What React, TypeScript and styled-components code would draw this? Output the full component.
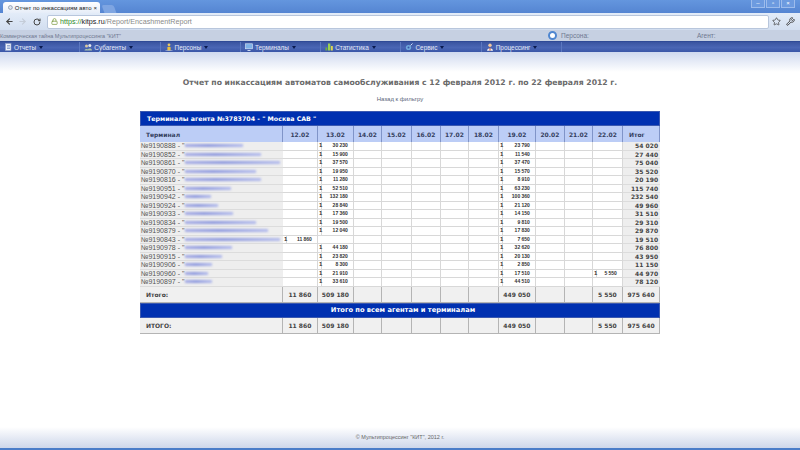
import styled, { createGlobalStyle } from "styled-components";
import { ArrowLeft, ArrowRight, RotateCw, Star, Wrench, Lock } from "lucide-react";

const GlobalStyle = createGlobalStyle`
  html, body { margin: 0; padding: 0; height: 100%; background: #fff; overflow: hidden; }
  #root { height: 100%; }
`;

const DAYS = ["12.02", "13.02", "14.02", "15.02", "16.02", "17.02", "18.02", "19.02", "20.02", "21.02", "22.02"];
const COLS = [143, 35, 36, 28, 30, 29, 28, 30, 37, 29, 28, 30, 37];
const MENU = ["Отчеты", "Субагенты", "Персоны", "Терминалы", "Статистика", "Сервис", "Процессинг"];

// each row: id, width of the hidden name, sums by day, total
const ROWS: { id: string; blur: number; sums: Record<string, string>; total: string }[] = [
  { id: "9190888", blur: 58, sums: { "13.02": "30 230", "19.02": "23 790" }, total: "54 020" },
  { id: "9190852", blur: 76, sums: { "13.02": "15 900", "19.02": "11 540" }, total: "27 440" },
  { id: "9190861", blur: 95, sums: { "13.02": "37 570", "19.02": "37 470" }, total: "75 040" },
  { id: "9190870", blur: 71, sums: { "13.02": "19 950", "19.02": "15 570" }, total: "35 520" },
  { id: "9190816", blur: 76, sums: { "13.02": "11 280", "19.02": "8 910" }, total: "20 190" },
  { id: "9190951", blur: 46, sums: { "13.02": "52 510", "19.02": "63 230" }, total: "115 740" },
  { id: "9190942", blur: 26, sums: { "13.02": "132 180", "19.02": "100 360" }, total: "232 540" },
  { id: "9190924", blur: 33, sums: { "13.02": "28 840", "19.02": "21 120" }, total: "49 960" },
  { id: "9190933", blur: 48, sums: { "13.02": "17 360", "19.02": "14 150" }, total: "31 510" },
  { id: "9190834", blur: 71, sums: { "13.02": "19 500", "19.02": "9 810" }, total: "29 310" },
  { id: "9190879", blur: 83, sums: { "13.02": "12 040", "19.02": "17 830" }, total: "29 870" },
  { id: "9190843", blur: 95, sums: { "12.02": "11 860", "19.02": "7 650" }, total: "19 510" },
  { id: "9190978", blur: 47, sums: { "13.02": "44 180", "19.02": "32 620" }, total: "76 800" },
  { id: "9190915", blur: 37, sums: { "13.02": "23 820", "19.02": "20 130" }, total: "43 950" },
  { id: "9190906", blur: 27, sums: { "13.02": "8 300", "19.02": "2 850" }, total: "11 150" },
  { id: "9190960", blur: 23, sums: { "13.02": "21 910", "19.02": "17 510", "22.02": "5 550" }, total: "44 970" },
  { id: "9190897", blur: 27, sums: { "13.02": "33 610", "19.02": "44 510" }, total: "78 120" },
];

const TOTALS: Record<string, string> = { "12.02": "11 860", "13.02": "509 180", "19.02": "449 050", "22.02": "5 550" };

const Page = styled.div`
  height: 450px;
  display: flex;
  flex-direction: column;
  font-family: "Liberation Sans", Arial, sans-serif;
`;

const TitleBar = styled.div`
  height: 13px;
  flex: none;
  background: linear-gradient(#6496de, #5585d2);
  display: flex;
  align-items: flex-end;
  padding-left: 3px;
  position: relative;
`;

const Tab = styled.div`
  width: 97px;
  height: 11px;
  box-sizing: border-box;
  background: linear-gradient(#fff, #e6edf8);
  border-radius: 3px 3px 0 0;
  display: flex;
  align-items: center;
  gap: 2px;
  padding: 0 3px 0 5px;
  font-size: 6px;
  color: #222;
  white-space: nowrap;
`;

const TabTitle = styled.span`
  flex: 1;
`;

const TabStub = styled.div`
  width: 12px;
  height: 8px;
  margin-left: 3px;
  background: #7ea5e2;
  border-radius: 2px 2px 0 0;
  transform: skewX(20deg);
`;

const WindowButtons = styled.div`
  position: absolute;
  right: 5px;
  top: 0;
  display: flex;
  gap: 1px;
`;

const WindowButton = styled.div`
  width: 14px;
  height: 8px;
  background: #6d9be0;
  border: 1px solid #9dbcec;
  border-top: 0;
  box-sizing: border-box;
  color: #fff;
  font-size: 6px;
  line-height: 7px;
  text-align: center;
`;

const Toolbar = styled.div`
  height: 17px;
  flex: none;
  background: linear-gradient(#e3ecf8, #d2def0);
  display: flex;
  align-items: center;
  padding: 0 3px;
  box-sizing: border-box;
`;

const NavIcon = styled.span<{ $w: number; $c?: string }>`
  width: ${({ $w }) => $w}px;
  display: flex;
  justify-content: center;
  color: ${({ $c }) => $c || "#444"};
`;

const UrlBox = styled.div`
  flex: 1;
  height: 14px;
  margin: 0 0 0 3px;
  box-sizing: border-box;
  background: #fff;
  border: 1px solid #b8c6dc;
  border-radius: 2px;
  display: flex;
  align-items: center;
  gap: 2px;
  padding-left: 3px;
  font-size: 7.2px;
  color: #8a8a8a;
`;

const UrlGreen = styled.span`
  color: #2a8a2a;
`;

const UrlHost = styled.span`
  color: #222;
`;

const InfoStrip = styled.div`
  height: 11px;
  flex: none;
  background: #c6d0e2;
  display: flex;
  align-items: center;
  font-size: 5.5px;
  color: #6f7890;
`;

const Secret = styled.span`
  width: 546px;
`;

const Person = styled.span`
  width: 151px;
  box-sizing: border-box;
  padding-left: 15px;
  font-size: 6.5px;
  position: relative;
`;

const PersonDot = styled.span`
  position: absolute;
  left: 2px;
  top: -1px;
  width: 5px;
  height: 5px;
  border-radius: 50%;
  background: #fff;
  border: 2px solid #4f86d0;
`;

const Agent = styled.span`
  font-size: 6.5px;
`;

const MenuBar = styled.div`
  height: 11px;
  flex: none;
  box-sizing: border-box;
  background: linear-gradient(#3a54a0, #4a66b4 55%, #3a56a8);
  border-top: 1px solid #2f4a96;
  display: flex;
`;

const MenuItem = styled.div`
  width: 80.3px;
  box-sizing: border-box;
  border-right: 1px solid #5c78c0;
  display: flex;
  align-items: center;
  gap: 2px;
  padding-left: 4px;
  font-size: 6.4px;
  color: #e4e9f6;
`;

const MenuGlyph = styled.svg`
  width: 8px;
  height: 8px;
  flex: none;
`;

const MenuArrow = styled.span`
  width: 0;
  height: 0;
  margin-left: 1px;
  border-left: 2.5px solid transparent;
  border-right: 2.5px solid transparent;
  border-top: 3px solid #0a1a50;
`;

const Main = styled.div`
  flex: 1;
  background: linear-gradient(#cfd9ef, #fff 20px);
  display: flex;
  flex-direction: column;
  align-items: center;
  padding-top: 25px;
`;

const Title = styled.h1`
  margin: 0;
  font: bold 7.7px/12px "DejaVu Sans", Verdana, sans-serif;
  color: #6a6a6a;
  white-space: nowrap;
`;

const BackLink = styled.a`
  margin-top: 6px;
  font-size: 6px;
  line-height: 8px;
  color: #5a6478;
`;

const Table = styled.table`
  margin-top: 8px;
  width: 520px;
  table-layout: fixed;
  border-collapse: separate;
  border-spacing: 0;
  border: 0;
  font-size: 6.5px;
  color: #333;
`;

const BlueRow = styled.td<{ $center?: boolean }>`
  height: 15px;
  padding: 0 0 0 6px;
  background: #0030b0;
  color: #fff;
  font: bold ${({ $center }) => ($center ? "6.7px" : "6.3px")} "DejaVu Sans", Verdana, sans-serif;
  text-align: ${({ $center }) => ($center ? "center" : "left")};
  border: 1px solid #3a58b0;
  box-sizing: border-box;
`;

const HeadCell = styled.th<{ $left?: boolean }>`
  height: 16px;
  padding: 0 0 0 ${({ $left }) => ($left ? "6px" : "0")};
  background: #bccdf6;
  color: #34405e;
  font: bold 6px "DejaVu Sans", Verdana, sans-serif;
  text-align: ${({ $left }) => ($left ? "left" : "center")};
  border-right: 1px solid #8094c8;
  box-sizing: border-box;
`;

const NameCell = styled.td`
  height: 8.5px;
  padding: 0 0 0 1px;
  box-sizing: border-box;
  background: #eeeeee;
  border-bottom: 1px solid #dcdcdc;
  font-size: 7px;
  line-height: 7px;
  color: #555;
  white-space: nowrap;
  overflow: hidden;
`;

const Smudge = styled.span`
  display: inline-block;
  height: 3px;
  margin-left: 1px;
  vertical-align: 1px;
  background: linear-gradient(90deg, #a8aee6, #8f9ade 40%, #b4bcec);
  filter: blur(0.8px);
`;

const DayCell = styled.td`
  height: 8.5px;
  padding: 0;
  box-sizing: border-box;
  background: #fff;
  border-right: 1px solid #d8d8d8;
  border-bottom: 1px solid #d8d8d8;
  font-size: 6px;
  line-height: 7px;
`;

const DayInner = styled.div`
  display: flex;
  height: 7.5px;
`;

const Count = styled.span`
  width: 4px;
  border-right: 1px solid #d8d8d8;
  padding-left: 1px;
  box-sizing: border-box;
  font-weight: bold;
`;

const Sum = styled.span`
  flex: 1;
  text-align: right;
  padding-right: 5px;
  font-weight: bold;
  font-size: 5px;
  color: #333;
`;

const TotalCell = styled.td`
  height: 8.5px;
  padding: 0 2px 0 0;
  box-sizing: border-box;
  background: #eeeeee;
  text-align: right;
  border-bottom: 1px solid #dcdcdc;
  font: bold 6px/7px "DejaVu Sans", Verdana, sans-serif;
  color: #444;
`;

const SumCell = styled.td<{ $left?: boolean }>`
  height: 16px;
  padding: 0 0 0 ${({ $left }) => ($left ? "6px" : "0")};
  box-sizing: border-box;
  background: #f0f0f0;
  border-right: 1px solid #b4b4b4;
  border-bottom: 1px solid #b4b4b4;
  font: bold 6px "DejaVu Sans", Verdana, sans-serif;
  color: #444;
  text-align: ${({ $left }) => ($left ? "left" : "center")};
`;

const Footer = styled.div`
  height: 27px;
  flex: none;
  box-sizing: border-box;
  background: linear-gradient(#fff, #fff 4px, #cdd6ea 25px, #cdd6ea);
  border-bottom: 2px solid #4a7cc8;
  font-size: 5.5px;
  color: #666;
  text-align: center;
  padding-top: 10px;
  line-height: 8px;
`;

// small menu pictures, in the order of MENU
const MENU_ICONS = [
  <>
    <rect x="1.5" y="0.5" width="5.5" height="7" fill="#eef2fa" stroke="#8fa0c8" strokeWidth="0.6" />
    <path d="M3 2.5h3M3 4h3M3 5.5h3" stroke="#5a78b8" strokeWidth="0.6" />
  </>,
  <>
    <circle cx="2.5" cy="3" r="1.5" fill="#d8c8a0" />
    <circle cx="5.8" cy="2.6" r="1.5" fill="#e4e8ee" />
    <path d="M0.5 7.5c0-2 4-2 4 0zM3.6 7.5c0-2.6 4.4-2.6 4.4 0z" fill="#a8c0a8" />
  </>,
  <>
    <circle cx="4" cy="1.8" r="1.4" fill="#e8c860" />
    <path d="M2.4 7.5V4.4c0-1 3.2-1 3.2 0v3.1z" fill="#e8c040" />
    <path d="M0.5 7.8h7" stroke="#dfe6f5" strokeWidth="0.6" />
  </>,
  <>
    <rect x="0.5" y="0.8" width="7" height="5" fill="#7fb2e8" stroke="#dce8f8" strokeWidth="0.6" />
    <path d="M2.5 7.5h3" stroke="#dce8f8" strokeWidth="0.9" />
  </>,
  <>
    <rect x="0.5" y="4.5" width="1.8" height="3" fill="#6fae3c" />
    <rect x="3" y="0.5" width="2.4" height="7" fill="#9ad050" />
    <rect x="6" y="3" width="1.8" height="4.5" fill="#e0d850" />
  </>,
  <>
    <circle cx="3.5" cy="4.5" r="2.6" fill="#6fa8dc" />
    <circle cx="3.5" cy="4.5" r="1" fill="#3a56a8" />
    <path d="M5.5 2.5l2-2" stroke="#cfe0f4" strokeWidth="1" />
  </>,
  <>
    <circle cx="4" cy="2.2" r="1.7" fill="#f0c8a0" />
    <path d="M1 7.8c0-3.4 6-3.4 6 0z" fill="#f4f4f4" />
    <path d="M3.4 4.8h1.2l-.2 3h-.8z" fill="#c84a30" />
  </>,
];

const TotalsRow = ({ label }: { label: string }) => (
  <tr>
    <SumCell $left>{label}</SumCell>
    {DAYS.map((d) => (
      <SumCell key={d}>{TOTALS[d]}</SumCell>
    ))}
    <SumCell>975 640</SumCell>
  </tr>
);

const App = () => {
  return (
    <Page>
      <GlobalStyle />
      <TitleBar>
        <Tab>
          <svg width="7" height="7" viewBox="0 0 8 8">
            <circle cx="4" cy="4" r="3.2" fill="#dfe6f0" stroke="#6a7a90" />
          </svg>
          <TabTitle>Отчет по инкассациям авто</TabTitle>
          <span>×</span>
        </Tab>
        <TabStub />
        <WindowButtons>
          <WindowButton>–</WindowButton>
          <WindowButton>▫</WindowButton>
          <WindowButton>×</WindowButton>
        </WindowButtons>
      </TitleBar>
      <Toolbar>
        <NavIcon $w={13}><ArrowLeft size={9} strokeWidth={3} /></NavIcon>
        <NavIcon $w={13} $c="#c4ccd8"><ArrowRight size={9} strokeWidth={3} /></NavIcon>
        <NavIcon $w={15}><RotateCw size={8} strokeWidth={3} /></NavIcon>
        <UrlBox>
          <Lock size={7} color="#7a9a40" strokeWidth={2.5} />
          <span>
            <UrlGreen>https://</UrlGreen>
            <UrlHost>kitps.ru</UrlHost>/Report/EncashmentReport
          </span>
        </UrlBox>
        <NavIcon $w={15}><Star size={9} strokeWidth={2} /></NavIcon>
        <NavIcon $w={13}><Wrench size={9} strokeWidth={2.5} /></NavIcon>
      </Toolbar>
      <InfoStrip>
        <Secret>Коммерческая тайна Мультипроцессинга "КИТ"</Secret>
        <Person>
          <PersonDot />
          Персона:
        </Person>
        <Agent>Агент:</Agent>
      </InfoStrip>
      <MenuBar>
        {MENU.map((m, i) => (
          <MenuItem key={m}>
            <MenuGlyph viewBox="0 0 8 8">{MENU_ICONS[i]}</MenuGlyph>
            {m}
            <MenuArrow />
          </MenuItem>
        ))}
      </MenuBar>
      <Main>
        <Title>Отчет по инкассациям автоматов самообслуживания с 12 февраля 2012 г. по 22 февраля 2012 г.</Title>
        <BackLink>Назад к фильтру</BackLink>
        <Table>
          <colgroup>
            {COLS.map((w, i) => (
              <col key={i} width={w} />
            ))}
          </colgroup>
          <tbody>
            <tr>
              <BlueRow colSpan={13}>Терминалы агента №3783704 - " Москва САВ "</BlueRow>
            </tr>
            <tr>
              <HeadCell $left>Терминал</HeadCell>
              {DAYS.map((d) => (
                <HeadCell key={d}>{d}</HeadCell>
              ))}
              <HeadCell $left>Итог</HeadCell>
            </tr>
            {ROWS.map((r) => (
              <tr key={r.id}>
                <NameCell>
                  №{r.id} - "<Smudge style={{ width: r.blur }} />
                </NameCell>
                {DAYS.map((d) => (
                  <DayCell key={d}>
                    {r.sums[d] && (
                      <DayInner>
                        <Count>1</Count>
                        <Sum>{r.sums[d]}</Sum>
                      </DayInner>
                    )}
                  </DayCell>
                ))}
                <TotalCell>{r.total}</TotalCell>
              </tr>
            ))}
            <TotalsRow label="Итого:" />
            <tr>
              <BlueRow colSpan={13} $center>Итого по всем агентам и терминалам</BlueRow>
            </tr>
            <TotalsRow label="ИТОГО:" />
          </tbody>
        </Table>
      </Main>
      <Footer>© Мультипроцессинг "КИТ", 2012 г.</Footer>
    </Page>
  );
};

export default App;
